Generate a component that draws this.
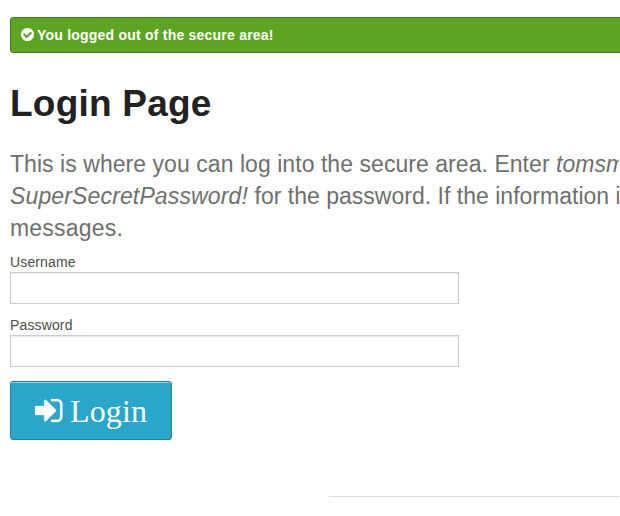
<div class="page">
  <div class="alert">
    <svg class="check" viewBox="0 0 1536 1536"><path fill="#fff" d="M1284 606q0-28-18-46l-91-90q-19-19-45-19t-45 19L677 877 451 651q-19-19-45-19t-45 19l-91 90q-18 18-18 46 0 27 18 45l362 362q19 19 45 19 27 0 46-19l543-543q18-18 18-45zm252 162q0 209-103 385.500T1153.500 1433 768 1536t-385.500-103T103 1153.500 0 768t103-385.500T382.500 103 768 0t385.500 103T1433 382.500 1536 768z"/></svg>
    <span>You logged out of the secure area!</span>
  </div>
  <h2>Login Page</h2>
  <h4>This is where you can log into the secure area. Enter <em>tomsmith</em> for the username and<br><em class="secret">SuperSecretPassword!</em> <span class="tight">for the password. If the information is wrong you should see error</span><br><span class="last">messages.</span></h4>
  <form onsubmit={(e) => e.preventDefault()}>
    <label for="username">Username</label>
    <input type="text" id="username" />
    <label for="password">Password</label>
    <input type="password" id="password" />
    <button type="submit">
      <svg class="enter" viewBox="0 0 1568 1280"><path fill="#fff" stroke="#fff" stroke-width="16" d="M1184 640q0 26-19 45l-544 544q-19 19-45 19t-45-19-19-45V896H64q-26 0-45-19T0 832V448q0-26 19-45t45-19h448V96q0-26 19-45t45-19 45 19l544 544q19 19 19 45zm352-352v704q0 119-84.500 203.500T1248 1280H928q-13 0-22.500-9.500T896 1248q0-4-1-20t-.5-26.500 3-23.500 10-19.500T928 1152h320q66 0 113-47t47-113V288q0-66-47-113t-113-47H936l-11.500-1-11.500-3-8-5.500-7-9-2-13.500q0-4-1-20t-.5-26.500 3-23.500 10-19.500T928 0h320q119 0 203.500 84.500T1536 288z"/></svg>
      <span>Login</span>
    </button>
  </form>
  <hr />
</div>

<style>
  :global(body) { margin: 0; background: #fff; overflow: hidden; }
  .page {
    box-sizing: border-box;
    width: 620px;
    height: 516px;
    padding: 17px 0 0 10px;
    overflow: hidden;
    font-family: "Liberation Sans", Arial, sans-serif;
    color: #222;
  }
  .alert {
    box-sizing: border-box;
    display: flex;
    align-items: center;
    width: 940px;
    height: 36px;
    padding-left: 10px;
    border: 1px solid #457a1a;
    border-radius: 3px;
    background: #5da423;
    color: #fff;
    font-size: 14px;
    font-weight: bold;
    letter-spacing: 0.22px;
    line-height: 14px;
  }
  .check { width: 13px; height: 13px; margin: -1px 3px 0 0; }
  h2 { margin: 25px 0 18px; font-size: 37px; font-weight: bold; letter-spacing: 0.22px; line-height: 52px; }
  h4 { width: 609px; margin: 0; overflow: hidden; color: #6f6f6f; font-size: 23px; font-weight: normal; letter-spacing: 0.05px; line-height: 32px; white-space: nowrap; }
  .secret { letter-spacing: 0.14px; }
  .tight { letter-spacing: 0.015px; }
  .last { letter-spacing: 0.2px; }
  form { display: flex; flex-direction: column; align-items: flex-start; margin-top: 8px; }
  label { height: 20px; color: #4d4d4d; font-size: 14px; letter-spacing: 0.14px; line-height: 21px; }
  input {
    box-sizing: border-box;
    width: 449px;
    height: 32px;
    margin: 0 0 11px;
    padding: 6px;
    border: 1px solid #ccc;
    border-radius: 0;
    background: #fff;
    box-shadow: inset 0 1px 2px rgba(0, 0, 0, 0.1);
    font-size: 14px;
    outline: none;
  }
  button {
    box-sizing: border-box;
    display: flex;
    align-items: center;
    width: 162px;
    height: 59px;
    margin: 3px 0 0;
    padding: 0 0 0 24px;
    border: 1px solid #2284a1;
    border-radius: 3px;
    background: #2ba6cb;
    box-shadow: inset 0 1px 0 rgba(255, 255, 255, 0.5);
    color: #fff;
    font-family: "Liberation Serif", serif;
    font-size: 32px;
    letter-spacing: 0.15px;
    line-height: 32px;
  }
  .enter { width: 28px; height: 23px; margin-right: 7px; overflow: visible; }
  hr { width: 290px; height: 1px; margin: 56px 0 0 319px; border: 0; background: #ddd; }
</style>
